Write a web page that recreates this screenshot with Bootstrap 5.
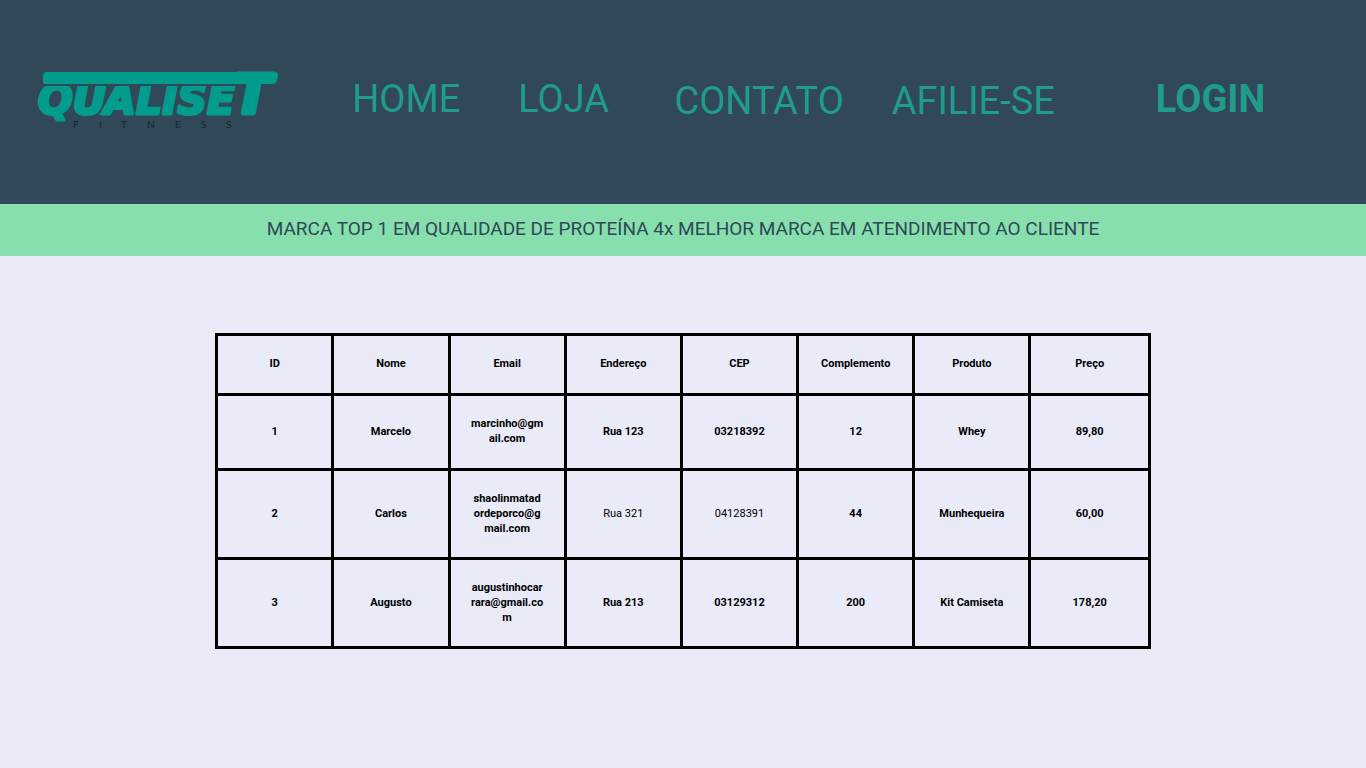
<!DOCTYPE html>
<html lang="pt-BR">
<head>
<meta charset="utf-8">
<meta name="viewport" content="width=device-width, initial-scale=1">
<title>Qualiset Fitness</title>
<link rel="stylesheet" href="https://cdn.jsdelivr.net/npm/bootstrap@5.3.0/dist/css/bootstrap.min.css">
<style>
  body { background: #e9ebf8; font-family: Roboto, "Liberation Sans", sans-serif; }
  .site-header {
    display: grid;
    grid-template-columns: 316fr 166fr 156fr 217fr 264fr 210fr;
    align-items: center;
    min-height: 204px;
    padding: 0 0 6px 36px;
    background: #304857;
  }
  .site-header a { color: #1f9c8c; font-size: 38px; line-height: 48px; white-space: nowrap; text-decoration: none; }
  .logo { width: 260px; max-width: 100%; height: auto; }
  .promo { min-height: 52px; padding-bottom: 2px; background: #87dfae; color: #304857; font-size: 19px; line-height: 24px; }
  .page-body { padding: 77px 0 48px; }
  .orders { width: 68.5%; table-layout: fixed; border-collapse: collapse; color: #000; font-size: 11px; line-height: 15px; text-align: center; }
  .orders th, .orders td { border: 3px solid #000; padding: 0 0 2px; font-weight: 700; }
  .orders .light { font-weight: 400; }
  .orders thead tr { height: 60px; }
  .orders tbody tr { height: 89px; }
  .orders tbody tr:first-child { height: 75px; }
  .col-end { width: 12.8%; }
</style>
</head>
<body>
<header>
  <nav class="site-header" aria-label="Principal">
    <a href="#" class="d-block" aria-label="Qualiset Fitness">
      <svg class="logo d-block" viewBox="36 59 260 80" width="260" height="80">
        <g fill="#029c8c" stroke="#029c8c" stroke-linejoin="round" font-family="'DejaVu Sans', sans-serif" font-weight="700" font-style="italic">
          <text x="38" y="114" font-size="41" stroke-width="3">QUALISE</text>
          <path stroke="none" fill="#304857" d="M36 80H280V86H36Z"/>
          <path stroke="none" d="M46 72H275Q279 72 278 76L277 80Q276 84 272 84H46Q42 84 43 80L43 76Q44 72 46 72Z"/>
          <text x="234" y="113" font-size="53" stroke-width="5">T</text>
        </g>
        <text x="73 99 121 147 175 201 226" y="128" font-family="Lato, sans-serif" font-size="10" fill="#15262f">FITNESS</text>
      </svg>
    </a>
    <a href="#">HOME</a>
    <a href="#">LOJA</a>
    <a href="#" class="pt-1">CONTATO</a>
    <a href="#" class="pt-1">AFILIE-SE</a>
    <a href="#" class="fw-bold">LOGIN</a>
  </nav>
  <div class="promo d-flex align-items-center justify-content-center text-center">MARCA TOP 1 EM QUALIDADE DE PROTEÍNA 4x MELHOR MARCA EM ATENDIMENTO AO CLIENTE</div>
</header>
<main class="page-body">
  <table class="orders mx-auto mb-0 align-middle">
    <colgroup><col span="7"><col class="col-end"></colgroup>
    <thead>
      <tr><th scope="col">ID</th><th scope="col">Nome</th><th scope="col">Email</th><th scope="col">Endereço</th><th scope="col">CEP</th><th scope="col">Complemento</th><th scope="col">Produto</th><th scope="col">Preço</th></tr>
    </thead>
    <tbody>
      <tr><td>1</td><td>Marcelo</td><td>marcinho@gm<br>ail.com</td><td>Rua 123</td><td>03218392</td><td>12</td><td>Whey</td><td>89,80</td></tr>
      <tr><td>2</td><td>Carlos</td><td>shaolinmatad<br>ordeporco@g<br>mail.com</td><td class="light">Rua 321</td><td class="light">04128391</td><td>44</td><td>Munhequeira</td><td>60,00</td></tr>
      <tr><td>3</td><td>Augusto</td><td>augustinhocar<br>rara@gmail.co<br>m</td><td>Rua 213</td><td>03129312</td><td>200</td><td>Kit Camiseta</td><td>178,20</td></tr>
    </tbody>
  </table>
</main>
<script src="https://cdn.jsdelivr.net/npm/bootstrap@5.3.0/dist/js/bootstrap.bundle.min.js"></script>
</body>
</html>
